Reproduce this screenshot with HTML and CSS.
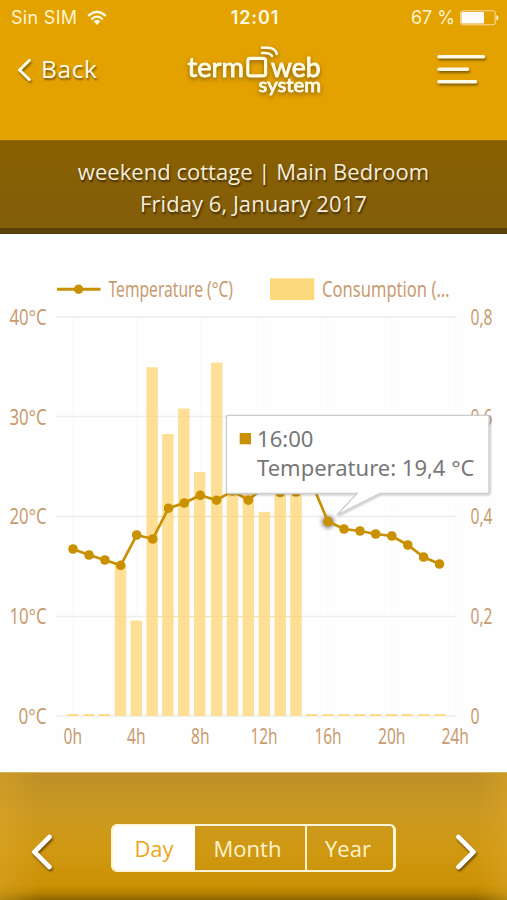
FILE: index.html
```html
<!DOCTYPE html>
<html lang="en">
<head>
<meta charset="utf-8">
<title>Termoweb</title>
<link rel="stylesheet" href="styles.css">
</head>
<body>
<div class="app">
  <div class="status">
    <div class="carrier"><span class="sim">Sin SIM</span>
      <svg width="20" height="16" viewBox="0 0 20 16" fill="none" stroke="#fffbe8" stroke-width="2.3"><path d="M1.2 6Q10-2.2 18.8 6M4.3 9.3Q10 4 15.7 9.3"/><path d="M6.6 11.3Q10 8.2 13.4 11.3L10 14.9Z" fill="#fffbe8" stroke="none"/></svg>
    </div>
    <div class="clock">12:01</div>
    <div class="power"><span>67 %</span>
      <svg width="39" height="16" viewBox="0 0 39 16"><rect x=".6" y=".8" width="34.6" height="14" rx="2.2" fill="none" stroke="#f8dda0"/><rect x="1.5" y="2" width="22.5" height="11.6" rx="1" fill="#fff"/><path d="M36.3 5Q38.5 5.4 38.5 7.8T36.3 10.6Z" fill="#fff3d0"/></svg>
    </div>
  </div>
  <header class="header">
    <a class="back"><svg width="15" height="24" viewBox="0 0 15 24" fill="none" stroke="#fffbe8" stroke-width="3.1" stroke-linecap="round" stroke-linejoin="round"><path d="M12.3 2.5 2.5 12 12.3 21.5"/></svg><span>Back</span></a>
    <svg class="logo" width="144" height="64" viewBox="182 40 144 64">
      <g fill="none" stroke="#fffbe8" stroke-linecap="round"><rect x="247.800" y="58.300" width="17.800" height="17.600" rx="2.500" stroke-width="3.200"/><path d="M262 47.800H268Q275.500 48 276.800 54" stroke-width="2.600"/><path d="M262 53H265Q270 53 272 56" stroke-width="2.600"/></g>
      <g class="logotype"><text x="187.500" y="76.800" font-size="26.500" textLength="56.500" lengthAdjust="spacingAndGlyphs">term</text><text x="271" y="76.800" font-size="26.500" textLength="49.500" lengthAdjust="spacingAndGlyphs">web</text><text x="258.500" y="92.300" font-size="18.500" textLength="62.500" lengthAdjust="spacingAndGlyphs">system</text></g>
    </svg>
    <svg class="menu" width="50" height="32" viewBox="436 54 50 32" stroke="#fffbe8" stroke-width="3.500" stroke-linecap="round"><path d="M439 56.700H483.500M439 69.200H467.500M439 81.700H475.500"/></svg>
  </header>
  <div class="title"><div class="place">weekend cottage | Main Bedroom</div><div class="date">Friday 6, January 2017</div></div>
  <main class="panel">
    <svg class="chart" width="507" height="538" viewBox="0 234 507 538">
      <defs>
        <marker id="dot" markerUnits="userSpaceOnUse" markerWidth="10" markerHeight="10" refX="5" refY="5"><circle cx="5" cy="5" r="4.800" fill="#c99000"/></marker>
        <filter id="glow" x="-100%" y="-100%" width="300%" height="300%"><feGaussianBlur stdDeviation="2"/></filter>
        <filter id="lift" x="-5%" y="-10%" width="112%" height="125%"><feDropShadow dx="1" dy="1" stdDeviation=".8" flood-color="#000" flood-opacity=".25"/></filter>
      </defs>
      <path d="M73 317V716M136.500 317V716M200.500 317V716M264 317V716M328 317V716M392 317V716M456 317V716" stroke="#f9f9f9"/>
      <path d="M56 317H456M56 416.500H456M56 516.500H456M56 616.500H456M56 716H456" stroke="#ededed" stroke-width="1.300"/>
      <path d="M120.500 716V565M136.300 716V620.500M152.100 716V367.300M167.900 716V434M183.800 716V408.500M199.700 716V472M216.700 716V362.500M232.500 716V440M248.300 716V440M264.300 716V512M280.200 716V440M296 716V440" stroke="#ffdf96" stroke-width="11.500"/>
      <path d="M67.500 715H78.500M83.300 715H94.300M99 715H110M306 715H317M322.500 715H333.500M354 715H365M338.500 715H349.500M370 715H381M386 715H397M401.500 715H412.500M418.500 715H429.500M434.500 715H445.500" stroke="#ffdc85" stroke-width="2.200"/>
      <path d="M115 616.500H126M147 416.500H158M179 416.500H190M211 416.500H222M147 516.500H302M147 616.500H302" stroke="#f5d68f" opacity=".6"/>
      <circle cx="328" cy="522" r="6" fill="#555" opacity=".75" filter="url(#glow)"/>
      <polyline points="73,549 89,555 104.900,560 120.700,565.300 136.700,535 152.700,539 168.500,508.200 184.300,503 200.300,495.300 216.500,500.200 232.500,491 248.300,500.200 264,487 280.200,492.500 296,492 312.500,485 328,521.500 344,529 360,531 375.700,534 391.800,536 407.800,545 423.500,557 439.500,564" fill="none" stroke="#c99000" stroke-width="2.700" marker-start="url(#dot)" marker-mid="url(#dot)" marker-end="url(#dot)"/>
      <path d="M57 289.200H100.500" stroke="#c99000" stroke-width="3"/><circle cx="78.600" cy="289.200" r="4.700" fill="#c99000"/>
      <rect x="270" y="278.300" width="44.200" height="21.700" fill="#fdd97e"/>
      <g class="labels">
        <text x="108.500" y="297.300" textLength="124.500" lengthAdjust="spacingAndGlyphs">Temperature (°C)</text>
        <text x="322" y="297.300" textLength="127.500" lengthAdjust="spacingAndGlyphs">Consumption (…</text>
        <text x="9.500" y="325" textLength="37" lengthAdjust="spacingAndGlyphs">40°C</text>
        <text x="9.500" y="424.700" textLength="37" lengthAdjust="spacingAndGlyphs">30°C</text>
        <text x="9.500" y="524.300" textLength="37" lengthAdjust="spacingAndGlyphs">20°C</text>
        <text x="9.500" y="624" textLength="37" lengthAdjust="spacingAndGlyphs">10°C</text>
        <text x="18.500" y="723.700" textLength="28" lengthAdjust="spacingAndGlyphs">0°C</text>
        <text x="470.500" y="325" textLength="22" lengthAdjust="spacingAndGlyphs">0,8</text>
        <text x="470.500" y="424.700" textLength="22" lengthAdjust="spacingAndGlyphs">0,6</text>
        <text x="470.500" y="524.300" textLength="22" lengthAdjust="spacingAndGlyphs">0,4</text>
        <text x="470.500" y="624" textLength="22" lengthAdjust="spacingAndGlyphs">0,2</text>
        <text x="470.500" y="723.700" textLength="9" lengthAdjust="spacingAndGlyphs">0</text>
        <text x="63.500" y="744" textLength="18.500" lengthAdjust="spacingAndGlyphs">0h</text>
        <text x="127" y="744" textLength="18.500" lengthAdjust="spacingAndGlyphs">4h</text>
        <text x="191" y="744" textLength="18.500" lengthAdjust="spacingAndGlyphs">8h</text>
        <text x="250.500" y="744" textLength="27" lengthAdjust="spacingAndGlyphs">12h</text>
        <text x="314.500" y="744" textLength="27" lengthAdjust="spacingAndGlyphs">16h</text>
        <text x="378" y="744" textLength="27.500" lengthAdjust="spacingAndGlyphs">20h</text>
        <text x="441.500" y="744" textLength="27.500" lengthAdjust="spacingAndGlyphs">24h</text>
      </g>
      <path d="M228 415.300H487Q489 415.300 489 417.300V492Q489 493.500 487 493.500H380L337 515 357 493.500H228Q226.500 493.500 226.500 492V417Q226.500 415.300 228 415.300Z" fill="#fff" stroke="#ccc" stroke-width="1.300" filter="url(#lift)"/>
      <rect x="239.700" y="433" width="11.300" height="11.300" fill="#c99000"/>
      <g class="tip"><text x="257" y="447" textLength="56.500" lengthAdjust="spacingAndGlyphs">16:00</text><text x="257" y="475.500" textLength="217.500" lengthAdjust="spacingAndGlyphs">Temperature: 19,4 °C</text></g>
    </svg>
  </main>
  <footer class="footer">
    <svg class="arrow" width="24" height="40" viewBox="0 0 24 40"><path d="M19.500 5 4.500 20 19.500 35"/></svg>
    <div class="tabs"><span class="tab active">Day</span><span class="tab month">Month</span><span class="tab year">Year</span></div>
    <svg class="arrow" width="24" height="40" viewBox="0 0 24 40"><path d="M4.500 5 19.500 20 4.500 35"/></svg>
  </footer>
</div>
</body>
</html>
```
FILE: styles.css
```css
* { box-sizing: border-box; }
body { margin: 0; background: #e3a200; font-family: "Open Sans", sans-serif; color: #fffbe8; }
svg { display: block; flex: none; }
.app { width: 507px; height: 900px; overflow: hidden; display: flex; flex-direction: column; }
.status { height: 36px; display: grid; grid-template-columns: 1fr auto 1fr; align-items: center; padding: 0 8px 1px 11px; font: 18px/22px Inter, sans-serif; white-space: nowrap; color: #fff3d0; }
.carrier, .power { display: flex; align-items: center; }
.carrier { gap: 10px; }
.sim { letter-spacing: .3px; }
.power { justify-content: flex-end; gap: 5px; }
.clock { font-weight: 600; letter-spacing: .9px; color: #fffbe8; }
.header { height: 104px; display: flex; align-items: flex-start; padding: 4px 21px 0 17px; }
.back { display: flex; align-items: center; gap: 9px; width: 165px; height: 60px; font-size: 24.5px; line-height: 30px; letter-spacing: .6px; text-shadow: 1px 2px 2px rgba(70,45,0,.65); }
.back svg, .menu { filter: drop-shadow(1px 2px 1px rgba(70,45,0,.6)); }
.back span { position: relative; top: -1px; }
.logo { filter: drop-shadow(0 2px 2px rgba(70,45,0,.55)); }
.logotype { font-family: Lato, sans-serif; font-weight: 400; fill: #fffbe8; stroke: #fffbe8; stroke-width: .9; stroke-linejoin: round; }
.menu { margin: 14px 0 0 110px; }
.title { height: 94px; padding-top: 14px; text-align: center; font-size: 22px; line-height: 32px; color: #f5eedb; background: linear-gradient(#896000, #835e0b); border-top: 1px solid #946a08; border-bottom: 6px solid #59400a; text-shadow: 1px 2px 2px rgba(40,25,0,.75); }
.place { letter-spacing: .03px; }
.date { letter-spacing: .05px; }
.panel { height: 538px; background: #fefefe; }
.labels { font-family: "Noto Sans", "Open Sans", sans-serif; font-size: 22px; fill: #c89c70; }
.tip { font-family: "Noto Sans", "Open Sans", sans-serif; font-size: 22px; fill: #777; }
.footer { height: 128px; display: flex; align-items: center; padding: 27px 21px 0 30px; border-top: 1px solid #d8b561; background: linear-gradient(90deg, rgba(218,164,38,.55), transparent 8%, transparent 94%, rgba(218,164,38,.55)), linear-gradient(#bd8f27, #cb9822 32%, #d09913 60%, #cb9105 88%, #b98300 94%, #8e6500); }
.arrow { position: relative; top: 1.5px; fill: none; stroke: #fff; stroke-width: 4.600; stroke-linecap: round; stroke-linejoin: round; filter: drop-shadow(1px 2px 1px rgba(60,40,0,.7)); }
.tabs { display: flex; flex: none; width: 285px; height: 48px; margin: 0 58px 4px 57px; border: 2px solid #fff5d8; border-right-width: 3px; border-radius: 6px; overflow: hidden; font-size: 22px; line-height: 44px; text-align: center; color: #fff3cf; }
.tab { width: 82px; }
.active { background: #fff; color: #eaa61c; }
.month { width: 112px; padding-right: 5px; border-right: 2px solid #fff0c8; }
.year { flex: 1; padding-right: 4px; }
```
